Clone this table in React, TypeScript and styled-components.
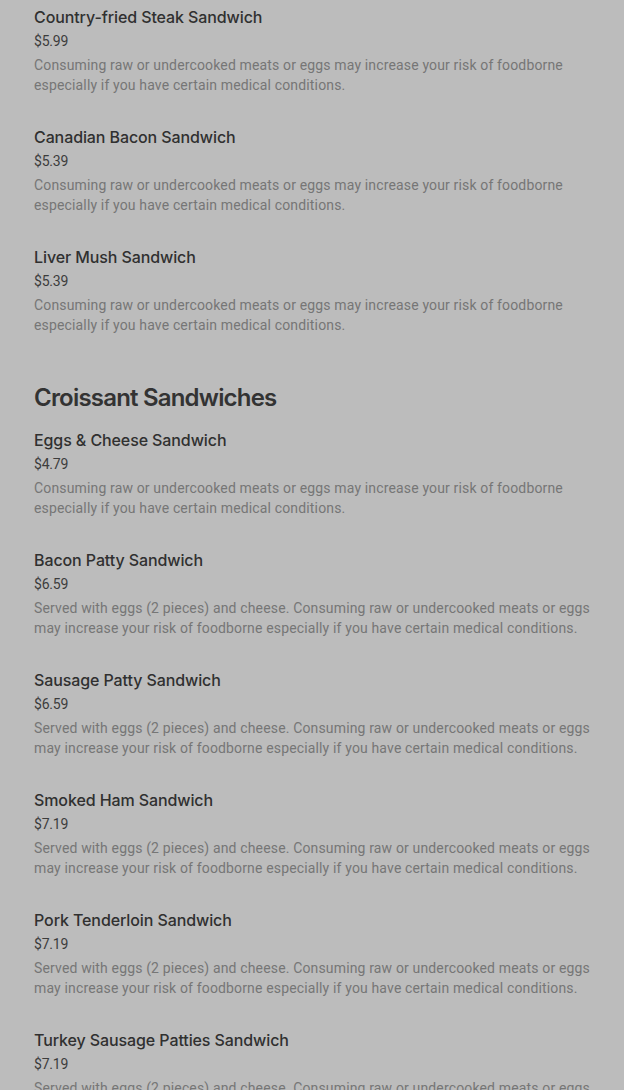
import styled, { createGlobalStyle } from "styled-components";

const GlobalStyle = createGlobalStyle`
  html, body {
    margin: 0;
    padding: 0;
    background: #bcbcbc;
  }
  body {
    font-family: Roboto, "Liberation Sans", sans-serif;
  }
`;

type MenuItem = {
  name: string;
  price: string;
  description: string;
};

type Section = {
  title?: string;
  items: MenuItem[];
};

const RAW =
  "Consuming raw or undercooked meats or eggs may increase your risk of foodborne especially if you have certain medical conditions.";
const SERVED = "Served with eggs (2 pieces) and cheese. " + RAW;

const sections: Section[] = [
  {
    items: [
      { name: "Country-fried Steak Sandwich", price: "$5.99", description: RAW },
      { name: "Canadian Bacon Sandwich", price: "$5.39", description: RAW },
      { name: "Liver Mush Sandwich", price: "$5.39", description: RAW },
    ],
  },
  {
    title: "Croissant Sandwiches",
    items: [
      { name: "Eggs & Cheese Sandwich", price: "$4.79", description: RAW },
      { name: "Bacon Patty Sandwich", price: "$6.59", description: SERVED },
      { name: "Sausage Patty Sandwich", price: "$6.59", description: SERVED },
      { name: "Smoked Ham Sandwich", price: "$7.19", description: SERVED },
      { name: "Pork Tenderloin Sandwich", price: "$7.19", description: SERVED },
      { name: "Turkey Sausage Patties Sandwich", price: "$7.19", description: SERVED },
    ],
  },
];

const Page = styled.main`
  height: 1090px;
  overflow: hidden;
  padding: 5px 34px 0;
  box-sizing: border-box;
`;

const SectionBlock = styled.section`
  display: flex;
  flex-direction: column;
  & + & {
    margin-top: 47px;
  }
`;

const SectionTitle = styled.h2`
  margin: 0 0 14px;
  font-family: Inter, "Noto Sans", sans-serif;
  font-size: 24px;
  line-height: 32px;
  font-weight: 600;
  letter-spacing: -0.8px;
  color: #333333;
`;

const ItemList = styled.ul`
  list-style: none;
  margin: 0;
  padding: 0;
  display: flex;
  flex-direction: column;
  gap: 30px;
`;

const Item = styled.li`
  display: flex;
  flex-direction: column;
`;

const ItemName = styled.h3`
  margin: 0;
  font-family: Inter, "Noto Sans", sans-serif;
  font-size: 16px;
  line-height: 24px;
  font-weight: 500;
  letter-spacing: -0.1px;
  color: #303030;
`;

const Price = styled.div`
  margin-top: 2px;
  font-size: 14px;
  line-height: 20px;
  letter-spacing: -0.2px;
  color: #3c3c3c;
`;

const Description = styled.p`
  margin: 4px 0 0;
  font-size: 14px;
  line-height: 20px;
  letter-spacing: 0.15px;
  color: #767676;
`;

export default function App() {
  return (
    <>
      <GlobalStyle />
      <Page>
        {sections.map((section, i) => (
          <SectionBlock key={i}>
            {section.title && <SectionTitle>{section.title}</SectionTitle>}
            <ItemList>
              {section.items.map((item) => (
                <Item key={item.name}>
                  <ItemName>{item.name}</ItemName>
                  <Price>{item.price}</Price>
                  <Description>{item.description}</Description>
                </Item>
              ))}
            </ItemList>
          </SectionBlock>
        ))}
      </Page>
    </>
  );
}
